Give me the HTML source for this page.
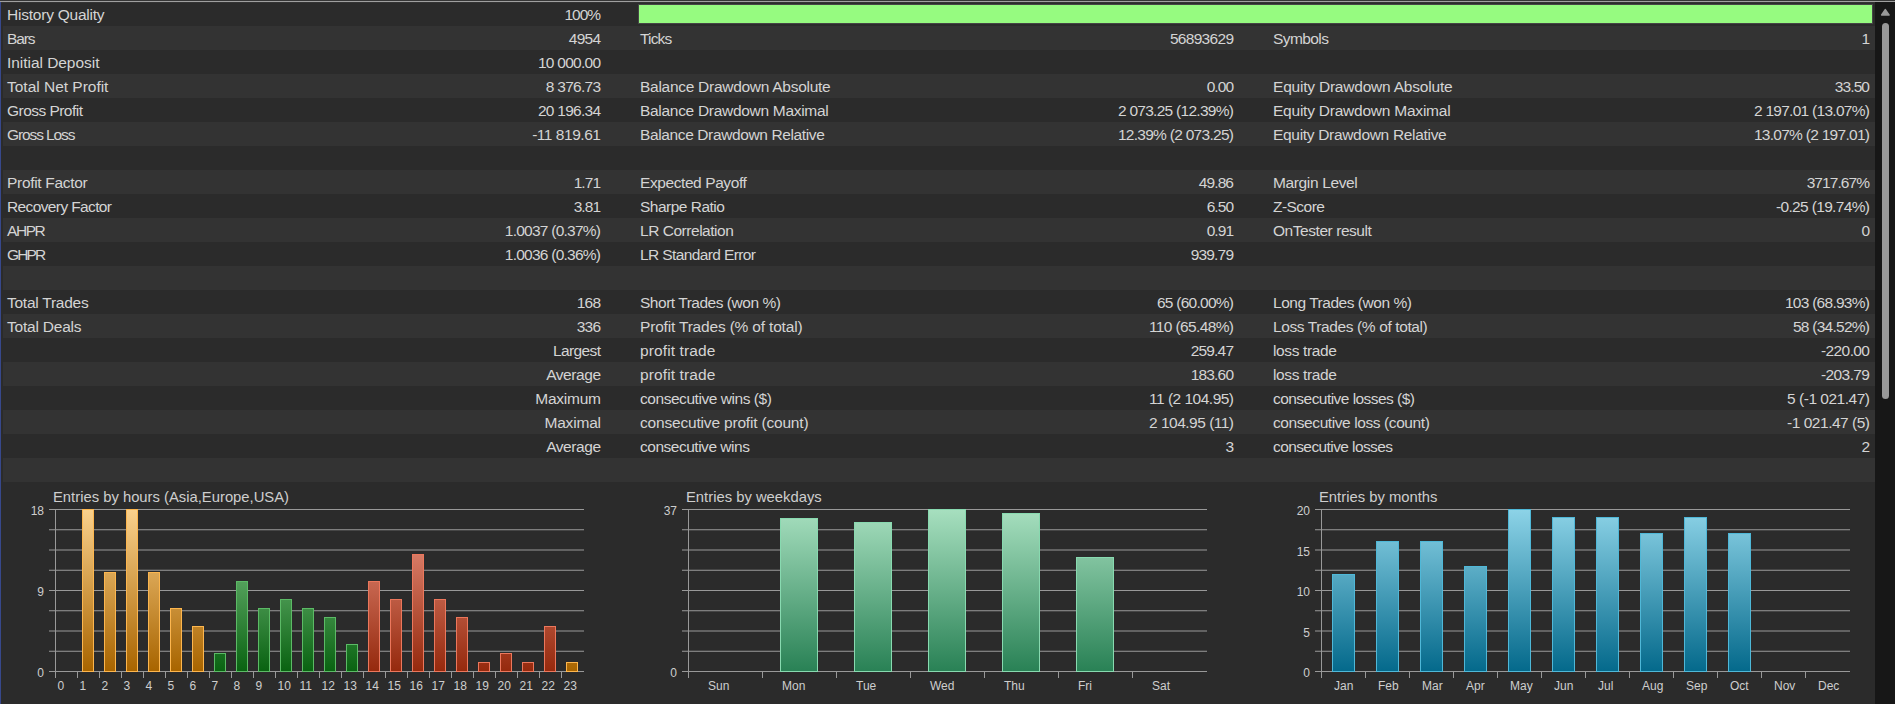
<!DOCTYPE html>
<html><head><meta charset="utf-8"><title>Report</title><style>
html,body{margin:0;padding:0;background:#2b2b2b;}
body{width:1895px;height:704px;overflow:hidden;position:relative;font-family:"Liberation Sans",sans-serif;}
#w{position:absolute;left:0;top:0;width:1895px;height:704px;overflow:hidden;background:#2b2b2b;}
.r{position:absolute;left:3px;width:1872px;height:24px;}
.l{background:#333333;}
.t{position:absolute;top:1px;height:24px;line-height:24px;font-size:15.5px;color:#d4d4d4;white-space:nowrap;}
.a{left:4px;} .b{right:1274px;text-align:right;} .c{left:637px;} .d{right:641px;text-align:right;} .e{left:1270px;} .f{right:5px;text-align:right;}
.g{position:absolute;background:#999999;}
.x{position:absolute;font-size:12px;line-height:14px;color:#cecece;white-space:nowrap;}
.y{position:absolute;font-size:12px;line-height:14px;color:#cecece;white-space:nowrap;text-align:right;width:40px;}
.ti{position:absolute;font-size:14.8px;line-height:18px;color:#cecece;white-space:nowrap;}
.bar{position:absolute;box-sizing:border-box;}
.o{border:1px solid #fdb64e;background:linear-gradient(#fbd28e 0px,#a96500 162px) no-repeat bottom/100% 163px;}

.gr{border:1px solid #5cba66;background:linear-gradient(#90d297 0px,#0a6312 162px) no-repeat bottom/100% 163px;}
.rd{border:1px solid #ec775c;background:linear-gradient(#f09a88 0px,#962a0e 162px) no-repeat bottom/100% 163px;}
.wk{border:1px solid #88dab0;background:linear-gradient(#a8e0c0 0px,#2a8256 162px) no-repeat bottom/100% 163px;}
.mn{border:1px solid #4fb8d8;background:linear-gradient(#8ed4e8 0px,#056a8c 162px) no-repeat bottom/100% 163px;}
</style></head><body><div id="w">
<div class="r" style="top:2px">
<span class="t a" style="letter-spacing:-0.225px">History Quality</span>
<span class="t b" style="letter-spacing:-1.061px;margin-right:1.061px">100%</span>
</div>
<div class="r l" style="top:26px">
<span class="t a" style="letter-spacing:-1.118px">Bars</span>
<span class="t b" style="letter-spacing:-0.771px;margin-right:0.771px">4954</span>
<span class="t c" style="letter-spacing:-0.837px">Ticks</span>
<span class="t d" style="letter-spacing:-0.696px;margin-right:0.696px">56893629</span>
<span class="t e" style="letter-spacing:-0.577px">Symbols</span>
<span class="t f" style="letter-spacing:-1.221px;margin-right:1.221px">1</span>
</div>
<div class="r" style="top:50px">
<span class="t a" style="letter-spacing:-0.043px">Initial Deposit</span>
<span class="t b" style="letter-spacing:-0.729px;margin-right:0.729px">10 000.00</span>
</div>
<div class="r l" style="top:74px">
<span class="t a" style="letter-spacing:-0.016px">Total Net Profit</span>
<span class="t b" style="letter-spacing:-0.742px;margin-right:0.742px">8 376.73</span>
<span class="t c" style="letter-spacing:-0.277px">Balance Drawdown Absolute</span>
<span class="t d" style="letter-spacing:-0.942px;margin-right:0.942px">0.00</span>
<span class="t e" style="letter-spacing:-0.208px">Equity Drawdown Absolute</span>
<span class="t f" style="letter-spacing:-0.878px;margin-right:0.878px">33.50</span>
</div>
<div class="r" style="top:98px">
<span class="t a" style="letter-spacing:-0.535px">Gross Profit</span>
<span class="t b" style="letter-spacing:-0.729px;margin-right:0.729px">20 196.34</span>
<span class="t c" style="letter-spacing:-0.298px">Balance Drawdown Maximal</span>
<span class="t d" style="letter-spacing:-0.714px;margin-right:0.714px">2 073.25 (12.39%)</span>
<span class="t e" style="letter-spacing:-0.227px">Equity Drawdown Maximal</span>
<span class="t f" style="letter-spacing:-0.714px;margin-right:0.714px">2 197.01 (13.07%)</span>
</div>
<div class="r l" style="top:122px">
<span class="t a" style="letter-spacing:-1.099px">Gross Loss</span>
<span class="t b" style="letter-spacing:-0.457px;margin-right:0.457px">-11 819.61</span>
<span class="t c" style="letter-spacing:-0.378px">Balance Drawdown Relative</span>
<span class="t d" style="letter-spacing:-0.714px;margin-right:0.714px">12.39% (2 073.25)</span>
<span class="t e" style="letter-spacing:-0.313px">Equity Drawdown Relative</span>
<span class="t f" style="letter-spacing:-0.714px;margin-right:0.714px">13.07% (2 197.01)</span>
</div>
<div class="r" style="top:146px">
</div>
<div class="r l" style="top:170px">
<span class="t a" style="letter-spacing:-0.309px">Profit Factor</span>
<span class="t b" style="letter-spacing:-0.942px;margin-right:0.942px">1.71</span>
<span class="t c" style="letter-spacing:-0.413px">Expected Payoff</span>
<span class="t d" style="letter-spacing:-0.878px;margin-right:0.878px">49.86</span>
<span class="t e" style="letter-spacing:-0.362px">Margin Level</span>
<span class="t f" style="letter-spacing:-0.926px;margin-right:0.926px">3717.67%</span>
</div>
<div class="r" style="top:194px">
<span class="t a" style="letter-spacing:-0.620px">Recovery Factor</span>
<span class="t b" style="letter-spacing:-0.942px;margin-right:0.942px">3.81</span>
<span class="t c" style="letter-spacing:-0.506px">Sharpe Ratio</span>
<span class="t d" style="letter-spacing:-0.942px;margin-right:0.942px">6.50</span>
<span class="t e" style="letter-spacing:-0.532px">Z-Score</span>
<span class="t f" style="letter-spacing:-0.652px;margin-right:0.652px">-0.25 (19.74%)</span>
</div>
<div class="r l" style="top:218px">
<span class="t a" style="letter-spacing:-1.416px">AHPR</span>
<span class="t b" style="letter-spacing:-0.756px;margin-right:0.756px">1.0037 (0.37%)</span>
<span class="t c" style="letter-spacing:-0.467px">LR Correlation</span>
<span class="t d" style="letter-spacing:-0.942px;margin-right:0.942px">0.91</span>
<span class="t e" style="letter-spacing:-0.446px">OnTester result</span>
<span class="t f" style="letter-spacing:-1.221px;margin-right:1.221px">0</span>
</div>
<div class="r" style="top:242px">
<span class="t a" style="letter-spacing:-1.846px">GHPR</span>
<span class="t b" style="letter-spacing:-0.756px;margin-right:0.756px">1.0036 (0.36%)</span>
<span class="t c" style="letter-spacing:-0.611px">LR Standard Error</span>
<span class="t d" style="letter-spacing:-0.835px;margin-right:0.835px">939.79</span>
</div>
<div class="r l" style="top:266px">
</div>
<div class="r" style="top:290px">
<span class="t a" style="letter-spacing:-0.253px">Total Trades</span>
<span class="t b" style="letter-spacing:-0.821px;margin-right:0.821px">168</span>
<span class="t c" style="letter-spacing:-0.475px">Short Trades (won %)</span>
<span class="t d" style="letter-spacing:-0.731px;margin-right:0.731px">65 (60.00%)</span>
<span class="t e" style="letter-spacing:-0.470px">Long Trades (won %)</span>
<span class="t f" style="letter-spacing:-0.722px;margin-right:0.722px">103 (68.93%)</span>
</div>
<div class="r l" style="top:314px">
<span class="t a" style="letter-spacing:-0.207px">Total Deals</span>
<span class="t b" style="letter-spacing:-0.821px;margin-right:0.821px">336</span>
<span class="t c" style="letter-spacing:-0.182px">Profit Trades (% of total)</span>
<span class="t d" style="letter-spacing:-0.626px;margin-right:0.626px">110 (65.48%)</span>
<span class="t e" style="letter-spacing:-0.387px">Loss Trades (% of total)</span>
<span class="t f" style="letter-spacing:-0.731px;margin-right:0.731px">58 (34.52%)</span>
</div>
<div class="r" style="top:338px">
<span class="t b" style="letter-spacing:-0.614px;margin-right:0.614px">Largest</span>
<span class="t c" style="letter-spacing:0.109px">profit trade</span>
<span class="t d" style="letter-spacing:-0.835px;margin-right:0.835px">259.47</span>
<span class="t e" style="letter-spacing:-0.380px">loss trade</span>
<span class="t f" style="letter-spacing:-0.596px;margin-right:0.596px">-220.00</span>
</div>
<div class="r l" style="top:362px">
<span class="t b" style="letter-spacing:-0.436px;margin-right:0.436px">Average</span>
<span class="t c" style="letter-spacing:0.109px">profit trade</span>
<span class="t d" style="letter-spacing:-0.835px;margin-right:0.835px">183.60</span>
<span class="t e" style="letter-spacing:-0.380px">loss trade</span>
<span class="t f" style="letter-spacing:-0.596px;margin-right:0.596px">-203.79</span>
</div>
<div class="r" style="top:386px">
<span class="t b" style="letter-spacing:-0.253px;margin-right:0.253px">Maximum</span>
<span class="t c" style="letter-spacing:-0.451px">consecutive wins ($)</span>
<span class="t d" style="letter-spacing:-0.512px;margin-right:0.512px">11 (2 104.95)</span>
<span class="t e" style="letter-spacing:-0.543px">consecutive losses ($)</span>
<span class="t f" style="letter-spacing:-0.488px;margin-right:0.488px">5 (-1 021.47)</span>
</div>
<div class="r l" style="top:410px">
<span class="t b" style="letter-spacing:-0.186px;margin-right:0.186px">Maximal</span>
<span class="t c" style="letter-spacing:-0.183px">consecutive profit (count)</span>
<span class="t d" style="letter-spacing:-0.512px;margin-right:0.512px">2 104.95 (11)</span>
<span class="t e" style="letter-spacing:-0.411px">consecutive loss (count)</span>
<span class="t f" style="letter-spacing:-0.488px;margin-right:0.488px">-1 021.47 (5)</span>
</div>
<div class="r" style="top:434px">
<span class="t b" style="letter-spacing:-0.436px;margin-right:0.436px">Average</span>
<span class="t c" style="letter-spacing:-0.485px">consecutive wins</span>
<span class="t d" style="letter-spacing:-1.221px;margin-right:1.221px">3</span>
<span class="t e" style="letter-spacing:-0.594px">consecutive losses</span>
<span class="t f" style="letter-spacing:-1.221px;margin-right:1.221px">2</span>
</div>
<div class="r l" style="top:458px">
</div>
<div style="position:absolute;left:638px;top:4px;width:1235px;height:20px;background:#464646"></div>
<div style="position:absolute;left:639px;top:5px;width:1233px;height:18px;background:#96fb80"></div>
<div style="position:absolute;left:0;top:0;width:1895px;height:1px;background:#363636"></div>
<div style="position:absolute;left:0;top:1px;width:1895px;height:1px;background:#a0a0a0"></div>
<div style="position:absolute;left:1px;top:2px;width:1874px;height:1px;background:#333333"></div>
<div style="position:absolute;left:0;top:2px;width:1px;height:702px;background:#37488b"></div>
<div style="position:absolute;left:1875px;top:2px;width:20px;height:702px;background:#171717"></div>
<svg style="position:absolute;left:1880px;top:8px" width="10" height="8" viewBox="0 0 10 8"><path d="M5.3 1.6 L9 7 L1.7 7 Z" fill="#999" stroke="#999" stroke-width="1.6" stroke-linejoin="round"/></svg>
<div style="position:absolute;left:1882px;top:23px;width:7px;height:376px;background:#999999;border-radius:3.5px"></div>
<div class="ti" style="left:53px;top:488px">Entries by hours (Asia,Europe,USA)</div>
<div class="g" style="left:49px;top:509px;width:535px;height:1px;background:#999999"></div>
<div class="g" style="left:49px;top:529px;width:535px;height:1px;background:#7e7e7e"></div>
<div class="g" style="left:49px;top:530px;width:535px;height:1px;background:#464646"></div>
<div class="g" style="left:49px;top:549px;width:535px;height:1px;background:#626262"></div>
<div class="g" style="left:49px;top:550px;width:535px;height:1px;background:#626262"></div>
<div class="g" style="left:49px;top:569px;width:535px;height:1px;background:#464646"></div>
<div class="g" style="left:49px;top:570px;width:535px;height:1px;background:#7e7e7e"></div>
<div class="g" style="left:49px;top:590px;width:535px;height:1px;background:#999999"></div>
<div class="g" style="left:49px;top:610px;width:535px;height:1px;background:#7e7e7e"></div>
<div class="g" style="left:49px;top:611px;width:535px;height:1px;background:#464646"></div>
<div class="g" style="left:49px;top:630px;width:535px;height:1px;background:#626262"></div>
<div class="g" style="left:49px;top:631px;width:535px;height:1px;background:#626262"></div>
<div class="g" style="left:49px;top:650px;width:535px;height:1px;background:#464646"></div>
<div class="g" style="left:49px;top:651px;width:535px;height:1px;background:#7e7e7e"></div>
<div class="g" style="left:49px;top:671px;width:535px;height:1px;background:#999999"></div>
<div class="g" style="left:55px;top:509px;width:1px;height:169px"></div>
<div class="g" style="left:77px;top:671px;width:1px;height:7px"></div>
<div class="g" style="left:99px;top:671px;width:1px;height:7px"></div>
<div class="g" style="left:121px;top:671px;width:1px;height:7px"></div>
<div class="g" style="left:143px;top:671px;width:1px;height:7px"></div>
<div class="g" style="left:165px;top:671px;width:1px;height:7px"></div>
<div class="g" style="left:187px;top:671px;width:1px;height:7px"></div>
<div class="g" style="left:209px;top:671px;width:1px;height:7px"></div>
<div class="g" style="left:231px;top:671px;width:1px;height:7px"></div>
<div class="g" style="left:253px;top:671px;width:1px;height:7px"></div>
<div class="g" style="left:275px;top:671px;width:1px;height:7px"></div>
<div class="g" style="left:297px;top:671px;width:1px;height:7px"></div>
<div class="g" style="left:319px;top:671px;width:1px;height:7px"></div>
<div class="g" style="left:341px;top:671px;width:1px;height:7px"></div>
<div class="g" style="left:363px;top:671px;width:1px;height:7px"></div>
<div class="g" style="left:385px;top:671px;width:1px;height:7px"></div>
<div class="g" style="left:407px;top:671px;width:1px;height:7px"></div>
<div class="g" style="left:429px;top:671px;width:1px;height:7px"></div>
<div class="g" style="left:451px;top:671px;width:1px;height:7px"></div>
<div class="g" style="left:473px;top:671px;width:1px;height:7px"></div>
<div class="g" style="left:495px;top:671px;width:1px;height:7px"></div>
<div class="g" style="left:517px;top:671px;width:1px;height:7px"></div>
<div class="g" style="left:539px;top:671px;width:1px;height:7px"></div>
<div class="g" style="left:561px;top:671px;width:1px;height:7px"></div>
<div class="y" style="left:4px;top:504.0px">18</div>
<div class="y" style="left:4px;top:585.0px">9</div>
<div class="y" style="left:4px;top:666.0px">0</div>
<div class="bar o" style="left:82px;top:509px;width:12px;height:163px"></div>
<div class="bar o" style="left:104px;top:572px;width:12px;height:100px"></div>
<div class="bar o" style="left:126px;top:509px;width:12px;height:163px"></div>
<div class="bar o" style="left:148px;top:572px;width:12px;height:100px"></div>
<div class="bar o" style="left:170px;top:608px;width:12px;height:64px"></div>
<div class="bar o" style="left:192px;top:626px;width:12px;height:46px"></div>
<div class="bar gr" style="left:214px;top:653px;width:12px;height:19px"></div>
<div class="bar gr" style="left:236px;top:581px;width:12px;height:91px"></div>
<div class="bar gr" style="left:258px;top:608px;width:12px;height:64px"></div>
<div class="bar gr" style="left:280px;top:599px;width:12px;height:73px"></div>
<div class="bar gr" style="left:302px;top:608px;width:12px;height:64px"></div>
<div class="bar gr" style="left:324px;top:617px;width:12px;height:55px"></div>
<div class="bar gr" style="left:346px;top:644px;width:12px;height:28px"></div>
<div class="bar rd" style="left:368px;top:581px;width:12px;height:91px"></div>
<div class="bar rd" style="left:390px;top:599px;width:12px;height:73px"></div>
<div class="bar rd" style="left:412px;top:554px;width:12px;height:118px"></div>
<div class="bar rd" style="left:434px;top:599px;width:12px;height:73px"></div>
<div class="bar rd" style="left:456px;top:617px;width:12px;height:55px"></div>
<div class="bar rd" style="left:478px;top:662px;width:12px;height:10px"></div>
<div class="bar rd" style="left:500px;top:653px;width:12px;height:19px"></div>
<div class="bar rd" style="left:522px;top:662px;width:12px;height:10px"></div>
<div class="bar rd" style="left:544px;top:626px;width:12px;height:46px"></div>
<div class="bar o" style="left:566px;top:662px;width:12px;height:10px"></div>
<div class="x" style="left:57.5px;top:679px">0</div>
<div class="x" style="left:79.5px;top:679px">1</div>
<div class="x" style="left:101.5px;top:679px">2</div>
<div class="x" style="left:123.5px;top:679px">3</div>
<div class="x" style="left:145.5px;top:679px">4</div>
<div class="x" style="left:167.5px;top:679px">5</div>
<div class="x" style="left:189.5px;top:679px">6</div>
<div class="x" style="left:211.5px;top:679px">7</div>
<div class="x" style="left:233.5px;top:679px">8</div>
<div class="x" style="left:255.5px;top:679px">9</div>
<div class="x" style="left:277.5px;top:679px">10</div>
<div class="x" style="left:299.5px;top:679px">11</div>
<div class="x" style="left:321.5px;top:679px">12</div>
<div class="x" style="left:343.5px;top:679px">13</div>
<div class="x" style="left:365.5px;top:679px">14</div>
<div class="x" style="left:387.5px;top:679px">15</div>
<div class="x" style="left:409.5px;top:679px">16</div>
<div class="x" style="left:431.5px;top:679px">17</div>
<div class="x" style="left:453.5px;top:679px">18</div>
<div class="x" style="left:475.5px;top:679px">19</div>
<div class="x" style="left:497.5px;top:679px">20</div>
<div class="x" style="left:519.5px;top:679px">21</div>
<div class="x" style="left:541.5px;top:679px">22</div>
<div class="x" style="left:563.5px;top:679px">23</div>
<div class="ti" style="left:686px;top:488px">Entries by weekdays</div>
<div class="g" style="left:682px;top:509px;width:525px;height:1px;background:#999999"></div>
<div class="g" style="left:682px;top:529px;width:525px;height:1px;background:#7e7e7e"></div>
<div class="g" style="left:682px;top:530px;width:525px;height:1px;background:#464646"></div>
<div class="g" style="left:682px;top:549px;width:525px;height:1px;background:#626262"></div>
<div class="g" style="left:682px;top:550px;width:525px;height:1px;background:#626262"></div>
<div class="g" style="left:682px;top:569px;width:525px;height:1px;background:#464646"></div>
<div class="g" style="left:682px;top:570px;width:525px;height:1px;background:#7e7e7e"></div>
<div class="g" style="left:682px;top:590px;width:525px;height:1px;background:#999999"></div>
<div class="g" style="left:682px;top:610px;width:525px;height:1px;background:#7e7e7e"></div>
<div class="g" style="left:682px;top:611px;width:525px;height:1px;background:#464646"></div>
<div class="g" style="left:682px;top:630px;width:525px;height:1px;background:#626262"></div>
<div class="g" style="left:682px;top:631px;width:525px;height:1px;background:#626262"></div>
<div class="g" style="left:682px;top:650px;width:525px;height:1px;background:#464646"></div>
<div class="g" style="left:682px;top:651px;width:525px;height:1px;background:#7e7e7e"></div>
<div class="g" style="left:682px;top:671px;width:525px;height:1px;background:#999999"></div>
<div class="g" style="left:688px;top:509px;width:1px;height:169px"></div>
<div class="g" style="left:762px;top:671px;width:1px;height:7px"></div>
<div class="g" style="left:836px;top:671px;width:1px;height:7px"></div>
<div class="g" style="left:910px;top:671px;width:1px;height:7px"></div>
<div class="g" style="left:984px;top:671px;width:1px;height:7px"></div>
<div class="g" style="left:1058px;top:671px;width:1px;height:7px"></div>
<div class="g" style="left:1132px;top:671px;width:1px;height:7px"></div>
<div class="y" style="left:637px;top:504.0px">37</div>
<div class="y" style="left:637px;top:666.0px">0</div>
<div class="bar wk" style="left:780px;top:518px;width:38px;height:154px"></div>
<div class="bar wk" style="left:854px;top:522px;width:38px;height:150px"></div>
<div class="bar wk" style="left:928px;top:509px;width:38px;height:163px"></div>
<div class="bar wk" style="left:1002px;top:513px;width:38px;height:159px"></div>
<div class="bar wk" style="left:1076px;top:557px;width:38px;height:115px"></div>
<div class="x" style="left:708.0px;top:679px">Sun</div>
<div class="x" style="left:782.0px;top:679px">Mon</div>
<div class="x" style="left:856.0px;top:679px">Tue</div>
<div class="x" style="left:930.0px;top:679px">Wed</div>
<div class="x" style="left:1004.0px;top:679px">Thu</div>
<div class="x" style="left:1078.0px;top:679px">Fri</div>
<div class="x" style="left:1152.0px;top:679px">Sat</div>
<div class="ti" style="left:1319px;top:488px">Entries by months</div>
<div class="g" style="left:1315px;top:509px;width:535px;height:1px;background:#999999"></div>
<div class="g" style="left:1315px;top:529px;width:535px;height:1px;background:#7e7e7e"></div>
<div class="g" style="left:1315px;top:530px;width:535px;height:1px;background:#464646"></div>
<div class="g" style="left:1315px;top:549px;width:535px;height:1px;background:#626262"></div>
<div class="g" style="left:1315px;top:550px;width:535px;height:1px;background:#626262"></div>
<div class="g" style="left:1315px;top:569px;width:535px;height:1px;background:#464646"></div>
<div class="g" style="left:1315px;top:570px;width:535px;height:1px;background:#7e7e7e"></div>
<div class="g" style="left:1315px;top:590px;width:535px;height:1px;background:#999999"></div>
<div class="g" style="left:1315px;top:610px;width:535px;height:1px;background:#7e7e7e"></div>
<div class="g" style="left:1315px;top:611px;width:535px;height:1px;background:#464646"></div>
<div class="g" style="left:1315px;top:630px;width:535px;height:1px;background:#626262"></div>
<div class="g" style="left:1315px;top:631px;width:535px;height:1px;background:#626262"></div>
<div class="g" style="left:1315px;top:650px;width:535px;height:1px;background:#464646"></div>
<div class="g" style="left:1315px;top:651px;width:535px;height:1px;background:#7e7e7e"></div>
<div class="g" style="left:1315px;top:671px;width:535px;height:1px;background:#999999"></div>
<div class="g" style="left:1321px;top:509px;width:1px;height:169px"></div>
<div class="g" style="left:1365px;top:671px;width:1px;height:7px"></div>
<div class="g" style="left:1409px;top:671px;width:1px;height:7px"></div>
<div class="g" style="left:1453px;top:671px;width:1px;height:7px"></div>
<div class="g" style="left:1497px;top:671px;width:1px;height:7px"></div>
<div class="g" style="left:1541px;top:671px;width:1px;height:7px"></div>
<div class="g" style="left:1585px;top:671px;width:1px;height:7px"></div>
<div class="g" style="left:1629px;top:671px;width:1px;height:7px"></div>
<div class="g" style="left:1673px;top:671px;width:1px;height:7px"></div>
<div class="g" style="left:1717px;top:671px;width:1px;height:7px"></div>
<div class="g" style="left:1761px;top:671px;width:1px;height:7px"></div>
<div class="g" style="left:1805px;top:671px;width:1px;height:7px"></div>
<div class="y" style="left:1270px;top:504.0px">20</div>
<div class="y" style="left:1270px;top:544.5px">15</div>
<div class="y" style="left:1270px;top:585.0px">10</div>
<div class="y" style="left:1270px;top:625.5px">5</div>
<div class="y" style="left:1270px;top:666.0px">0</div>
<div class="bar mn" style="left:1332px;top:574px;width:23px;height:98px"></div>
<div class="bar mn" style="left:1376px;top:541px;width:23px;height:131px"></div>
<div class="bar mn" style="left:1420px;top:541px;width:23px;height:131px"></div>
<div class="bar mn" style="left:1464px;top:566px;width:23px;height:106px"></div>
<div class="bar mn" style="left:1508px;top:509px;width:23px;height:163px"></div>
<div class="bar mn" style="left:1552px;top:517px;width:23px;height:155px"></div>
<div class="bar mn" style="left:1596px;top:517px;width:23px;height:155px"></div>
<div class="bar mn" style="left:1640px;top:533px;width:23px;height:139px"></div>
<div class="bar mn" style="left:1684px;top:517px;width:23px;height:155px"></div>
<div class="bar mn" style="left:1728px;top:533px;width:23px;height:139px"></div>
<div class="x" style="left:1334.0px;top:679px">Jan</div>
<div class="x" style="left:1378.0px;top:679px">Feb</div>
<div class="x" style="left:1422.0px;top:679px">Mar</div>
<div class="x" style="left:1466.0px;top:679px">Apr</div>
<div class="x" style="left:1510.0px;top:679px">May</div>
<div class="x" style="left:1554.0px;top:679px">Jun</div>
<div class="x" style="left:1598.0px;top:679px">Jul</div>
<div class="x" style="left:1642.0px;top:679px">Aug</div>
<div class="x" style="left:1686.0px;top:679px">Sep</div>
<div class="x" style="left:1730.0px;top:679px">Oct</div>
<div class="x" style="left:1774.0px;top:679px">Nov</div>
<div class="x" style="left:1818.0px;top:679px">Dec</div>
</div></body></html>
